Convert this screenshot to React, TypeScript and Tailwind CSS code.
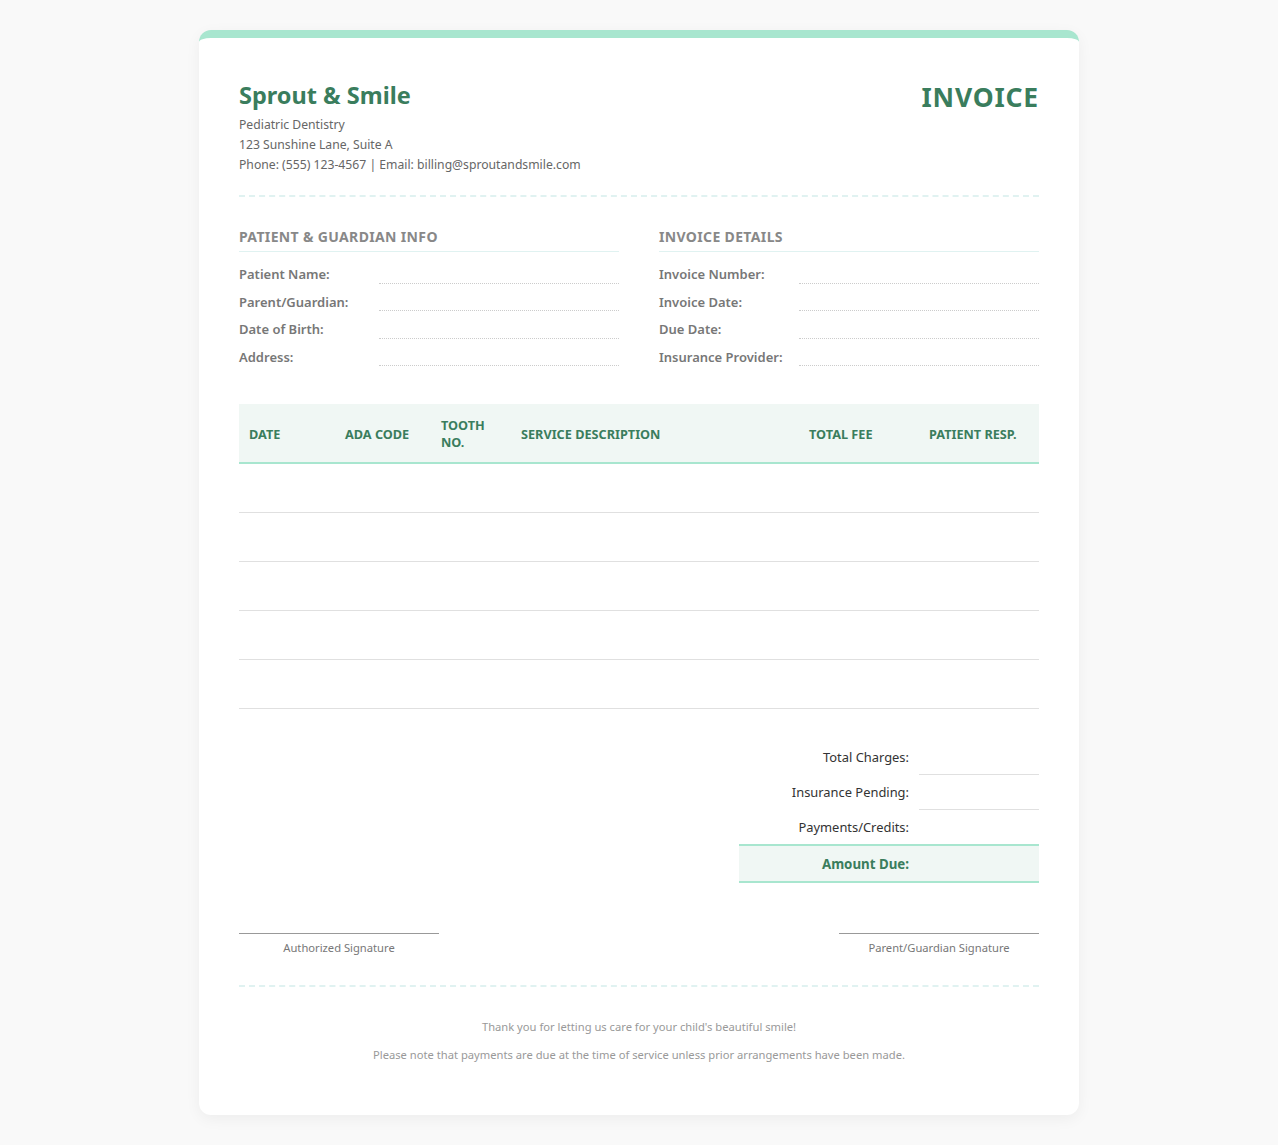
const font = "font-['Noto_Sans',sans-serif]"

const patientFields = ["Patient Name:", "Parent/Guardian:", "Date of Birth:", "Address:"]
const invoiceFields = ["Invoice Number:", "Invoice Date:", "Due Date:", "Insurance Provider:"]

const columns = [
  { label: "DATE", width: "w-[96px]" },
  { label: "ADA CODE", width: "w-[96px]" },
  { label: "TOOTH NO.", width: "w-[80px]" },
  { label: "SERVICE DESCRIPTION", width: "w-[288px]" },
  { label: "TOTAL FEE", width: "w-[120px]" },
  { label: "PATIENT RESP.", width: "w-[120px]" },
]

function FieldGroup({ title, fields }: { title: string; fields: string[] }) {
  return (
    <div className="flex-1">
      <h3 className="mb-[12px] border-b border-[#e0f2f1] pb-[5px] text-[14px] font-bold tracking-[0.35px] leading-[19px] text-[#888888]">
        {title}
      </h3>
      {fields.map((field) => (
        <div key={field} className="mb-[8px] flex h-[19.6px] items-center">
          <span className="w-[140px] pt-[2px] text-[13px] font-semibold text-[#777777]">{field}</span>
          <span className="h-full flex-1 border-b border-dotted border-[#cccccc]" />
        </div>
      ))}
    </div>
  )
}

function TotalRow({ label, border, height, pad }: { label: string; border?: boolean; height: string; pad: string }) {
  return (
    <div className={`flex ${height}`}>
      <div className={`flex-1 pr-[10px] ${pad} text-right text-[12.9px] leading-[19px] text-[#333333]`}>{label}</div>
      <div className={`w-[120px] ${border ? "border-b border-[#e0e0e0]" : ""}`} />
    </div>
  )
}

export default function App() {
  return (
    <div className={`${font} min-h-[1145px] bg-[#f9f9f9] pt-[30px] text-[#555555]`}>
      <div className="mx-auto h-[1085px] w-[880px] rounded-[12px] border-t-[8px] border-[#a8e6cf] bg-white px-[40px] pt-[40px] shadow-[0_4px_15px_rgba(0,0,0,0.05)]">
        <header className="flex justify-between border-b-2 border-dashed border-[#e0f2f1] pb-[20px]">
          <div>
            <h1 className="mb-[3px] pt-[1px] text-[23.5px] font-bold leading-[33px] text-[#3a7d5d]">Sprout &amp; Smile</h1>
            <p className="text-[12.2px] leading-[20px] text-[#666666]">Pediatric Dentistry</p>
            <p className="text-[12.2px] leading-[20px] text-[#666666]">123 Sunshine Lane, Suite A</p>
            <p className="text-[12.2px] leading-[20px] text-[#666666]">Phone: (555) 123-4567 | Email: billing@sproutandsmile.com</p>
          </div>
          <div className="text-[26.5px] font-bold tracking-[0.8px] leading-[38px] text-[#3a7d5d]">INVOICE</div>
        </header>

        <section className="mt-[30px] flex gap-[40px]">
          <FieldGroup title="PATIENT & GUARDIAN INFO" fields={patientFields} />
          <FieldGroup title="INVOICE DETAILS" fields={invoiceFields} />
        </section>

        <table className="mt-[30px] w-[800px] table-fixed border-collapse">
          <thead>
            <tr className="h-[59px] border-b-2 border-[#a8e6cf] bg-[#f0f7f4]">
              {columns.map((col) => (
                <th key={col.label} className={`${col.width} px-[10px] pt-[2px] text-left text-[12.7px] font-bold leading-[17px] text-[#3a7d5d]`}>
                  {col.label}
                </th>
              ))}
            </tr>
          </thead>
          <tbody>
            {[0, 1, 2, 3, 4].map((row) => (
              <tr key={row} className="h-[49px] border-b border-[#e0e0e0]">
                {columns.map((col) => (
                  <td key={col.label} />
                ))}
              </tr>
            ))}
          </tbody>
        </table>

        <div className="ml-auto mt-[30px] w-[300px]">
          <TotalRow label="Total Charges:" border height="h-[36px]" pad="pt-[9px]" />
          <TotalRow label="Insurance Pending:" border height="h-[35px]" pad="pt-[8px]" />
          <TotalRow label="Payments/Credits:" height="h-[34px]" pad="pt-[8px]" />
          <div className="flex border-y-2 border-[#a8e6cf] bg-[#f0f7f4]">
            <div className="flex-1 pb-[7px] pr-[10px] pt-[9px] text-right text-[13.3px] font-bold leading-[19px] text-[#3a7d5d]">Amount Due:</div>
            <div className="w-[120px]" />
          </div>
        </div>

        <div className="mt-[50px] flex justify-between">
          <div className="w-[200px] border-t border-[#999999] pt-[5px] text-center text-[11.2px] leading-[18px] text-[#777777]">Authorized Signature</div>
          <div className="w-[200px] border-t border-[#999999] pt-[5px] text-center text-[11.2px] leading-[18px] text-[#777777]">Parent/Guardian Signature</div>
        </div>

        <footer className="mt-[28px] border-t-2 border-dashed border-[#e0f2f1] pt-[31px] text-center text-[11.2px] leading-[18px] text-[#999999]">
          <p className="mb-[10px]">Thank you for letting us care for your child's beautiful smile!</p>
          <p>Please note that payments are due at the time of service unless prior arrangements have been made.</p>
        </footer>
      </div>
    </div>
  )
}
